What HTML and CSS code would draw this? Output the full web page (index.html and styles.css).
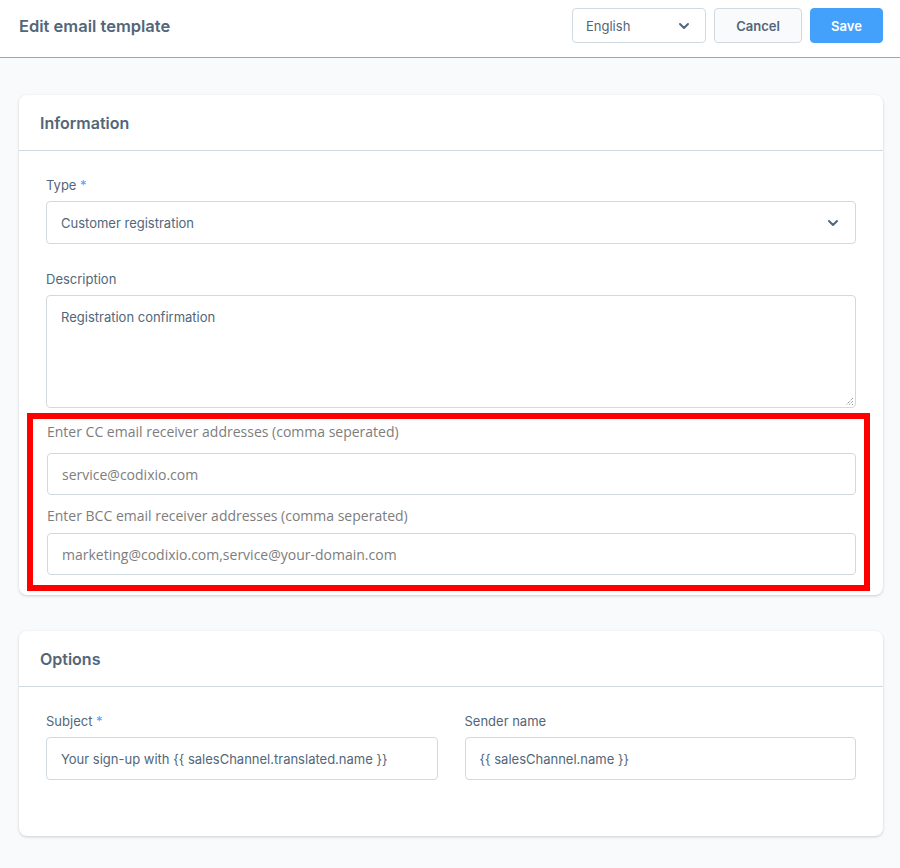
FILE: index.html
```html
<!DOCTYPE html>
<html lang="en">
<head>
  <meta charset="UTF-8">
  <meta name="viewport" content="width=device-width, initial-scale=1.0">
  <title>Edit email template</title>
  <link rel="stylesheet" href="styles.css">
</head>
<body>

  <header class="top-bar">
    <h1 class="page-title">Edit email template</h1>
    <div class="top-actions">
      <div class="lang-select">
        <span>English</span>
        <svg class="chevron" width="12" height="8" viewBox="0 0 12 8"><path d="M2 2l4 4 4-4" fill="none" stroke="#52667a" stroke-width="2" stroke-linecap="round" stroke-linejoin="round"/></svg>
      </div>
      <button class="btn btn-cancel">Cancel</button>
      <button class="btn btn-save">Save</button>
    </div>
  </header>

  <main class="content">

    <section class="card">
      <div class="card-header">Information</div>
      <div class="card-body card-body-info">
        <div class="field">
          <label>Type <span class="req">*</span></label>
          <div class="input select">
            <span>Customer registration</span>
            <svg class="chevron" width="12" height="8" viewBox="0 0 12 8"><path d="M2 2l4 4 4-4" fill="none" stroke="#52667a" stroke-width="2" stroke-linecap="round" stroke-linejoin="round"/></svg>
          </div>
        </div>
        <div class="field">
          <label>Description</label>
          <div class="input textarea">
            <span>Registration confirmation</span>
            <svg class="grip" width="9" height="9" viewBox="0 0 9 9"><path d="M8 1L1 8M8 4L4 8M8 7L7 8" stroke="#6b7785" stroke-width="1" stroke-dasharray="1 1"/></svg>
          </div>
        </div>
        <div class="highlight">
          <div class="cc-field">
            <label>Enter CC email receiver addresses (comma seperated)</label>
            <div class="cc-input">service@codixio.com</div>
          </div>
          <div class="cc-field">
            <label>Enter BCC email receiver addresses (comma seperated)</label>
            <div class="cc-input">marketing@codixio.com,service@your-domain.com</div>
          </div>
        </div>
      </div>
    </section>

    <section class="card">
      <div class="card-header">Options</div>
      <div class="card-body card-body-options">
        <div class="field">
          <label>Subject <span class="req">*</span></label>
          <div class="input">Your sign-up with {{ salesChannel.translated.name }}</div>
        </div>
        <div class="field">
          <label>Sender name</label>
          <div class="input">{{ salesChannel.name }}</div>
        </div>
      </div>
    </section>

  </main>

</body>
</html>
```

FILE: styles.css
```css
body {
  margin: 0;
  background-color: #f9fafb;
  font-family: Inter, "Noto Sans", sans-serif;
  color: #52667a;
  height: 868px;
  overflow: hidden;
}

.top-bar {
  height: 57px;
  background-color: #ffffff;
  border-bottom: 1px solid #9aa5b1;
  display: flex;
  align-items: center;
  justify-content: space-between;
  padding: 0 17px 0 19px;
}

.page-title {
  margin: -6px 0 0;
  font-size: 16.5px;
  font-weight: 600;
  color: #52667a;
}

.top-actions {
  display: flex;
  gap: 8px;
  margin-top: -6px;
}

.lang-select {
  width: 104px;
  height: 33px;
  border: 1px solid #d1d9e0;
  border-radius: 4px;
  display: flex;
  align-items: center;
  justify-content: space-between;
  padding: 0 15px 0 13px;
  font-size: 13px;
  color: #52667a;
}

.btn {
  height: 35px;
  border-radius: 4px;
  font-family: Inter, "Noto Sans", sans-serif;
  font-size: 13px;
  font-weight: 600;
  cursor: pointer;
}

.btn-cancel {
  width: 88px;
  background-color: #f9fafb;
  border: 1px solid #d1d9e0;
  color: #52667a;
}

.btn-save {
  width: 73px;
  background-color: #43a1fc;
  border: 1px solid #43a1fc;
  color: #ffffff;
}

.content {
  padding: 37px 17px 0 19px;
  display: flex;
  flex-direction: column;
  gap: 36px;
}

.card {
  background-color: #ffffff;
  border-radius: 8px;
  box-shadow: 0 1px 3px rgba(0, 0, 0, 0.18);
}

.card-header {
  height: 55px;
  border-bottom: 1px solid #d1d9e0;
  display: flex;
  align-items: center;
  padding: 0 21px;
  font-size: 16px;
  font-weight: 600;
  color: #52667a;
}

.card-body {
  padding: 26px 27px 4px;
}

.card-body-info {
  display: flex;
  flex-direction: column;
}

.card-body-options {
  display: grid;
  grid-template-columns: 1fr 1fr;
  column-gap: 27px;
  padding-bottom: 29px;
}

.field {
  display: flex;
  flex-direction: column;
  margin-bottom: 27px;
}

.field label {
  font-size: 13px;
  line-height: 16px;
  margin-bottom: 8px;
  color: #52667a;
}

.req {
  color: #4aa3ff;
}

.input {
  height: 41px;
  border: 1px solid #d1d9e0;
  border-radius: 4px;
  padding: 0 14px;
  display: flex;
  align-items: center;
  font-size: 13px;
  color: #52667a;
}

.select {
  justify-content: space-between;
  padding-right: 16px;
}

.textarea {
  align-items: flex-start;
  padding-top: 13px;
  box-sizing: border-box;
  height: 113px;
  position: relative;
}

.grip {
  position: absolute;
  right: 1px;
  bottom: 1px;
}

.field:nth-child(2) {
  margin-bottom: 0;
}

.highlight {
  margin: 5px -14px 0 -19px;
  border: 6px solid #ff0000;
  padding: 3px 8px 10px 14px;
  display: flex;
  flex-direction: column;
  gap: 11px;
}

.cc-field {
  display: flex;
  flex-direction: column;
}

.cc-field label {
  font-family: "Open Sans", sans-serif;
  font-size: 14px;
  line-height: 20px;
  color: #7d7d7d;
  margin-bottom: 11px;
}

.cc-field:nth-child(2) label {
  margin-bottom: 7px;
}

.cc-input {
  height: 40px;
  border: 1px solid #d1d9e0;
  border-radius: 4px;
  padding: 0 14px;
  display: flex;
  align-items: center;
  font-family: "Open Sans", sans-serif;
  font-size: 14px;
  color: #7d7d7d;
}
```
